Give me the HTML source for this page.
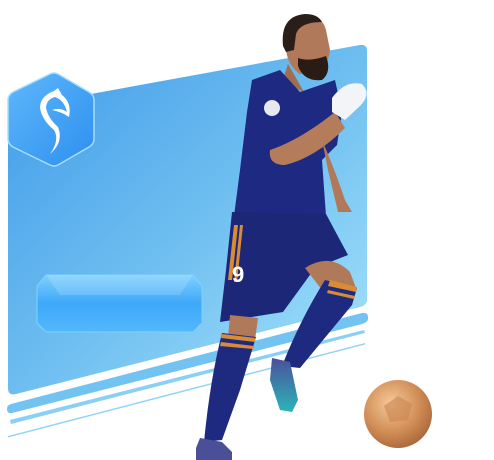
<!DOCTYPE html>
<html><head><meta charset="utf-8"><style>
html,body{margin:0;padding:0;background:#fff;width:494px;height:460px;overflow:hidden;font-family:"Liberation Sans",sans-serif}
</style></head><body>
<svg width="494" height="460" viewBox="0 0 494 460" xmlns="http://www.w3.org/2000/svg">
<defs>
<linearGradient id="pg" x1="0" y1="0" x2="1" y2="1">
<stop offset="0" stop-color="#3f9be8"/><stop offset="0.5" stop-color="#6dbdf0"/><stop offset="1" stop-color="#a6e4fc"/>
</linearGradient>
<linearGradient id="hx" x1="0" y1="0" x2="1" y2="1">
<stop offset="0" stop-color="#5fb8fb"/><stop offset="1" stop-color="#2d8fef"/>
</linearGradient>
<linearGradient id="bt" x1="0" y1="0" x2="0" y2="1">
<stop offset="0" stop-color="#7fd0fd"/><stop offset="0.5" stop-color="#3ea8fa"/><stop offset="1" stop-color="#53b8fb"/>
</linearGradient>
<radialGradient id="ball" cx="0.4" cy="0.35" r="0.7">
<stop offset="0" stop-color="#f6c99a"/><stop offset="0.6" stop-color="#d18d55"/><stop offset="1" stop-color="#a8653a"/>
</radialGradient>
<linearGradient id="boot" x1="0" y1="0" x2="0" y2="1">
<stop offset="0" stop-color="#4c4f9a"/><stop offset="1" stop-color="#2bb5b8"/>
</linearGradient>
</defs>
<path d="M14 108 L360 45 Q367 44 367 51 L367 300 Q367 305 360 307 L16 394 Q8 396 8 388 L8 116 Q8 109 14 108Z" fill="url(#pg)"/>
<path d="M11 404 L362 313 Q368 312 368 317 L368 319 Q368 322 362 324 L12 413 Q7 414 7 409 Q7 405 11 404Z" fill="#73c3f2"/>
<path d="M10 420 L364 330 L365 333 L11 424Z" fill="#8ad0f5"/>
<path d="M8 436 L365 343 L365 344.5 L8 437.5Z" fill="#8fd4f7"/>
<path d="M50 74 Q54 72 58 74 L89 92 Q94 95 94 100 L94 139 Q94 144 89 147 L58 165 Q54 167 50 165 L13 147 Q8 144 8 139 L8 100 Q8 95 13 92Z" fill="url(#hx)" stroke="#a9ddff" stroke-width="1.5"/>
<path d="M54 91 Q40 96 40 108 Q42 120 54 130 Q60 140 50 154 Q64 142 58 127 Q47 117 46 107 Q47 99 55 97 Q64 100 67 112 Q60 107 52 110 Q62 112 69 117 Q72 103 62 95 L58 88Z" fill="#fff"/>
<path d="M46 275 L193 275 L202 286 L202 323 L193 332 L46 332 L37 323 L37 286Z" fill="url(#bt)" stroke="#7fd3ff" stroke-width="1"/>
<path d="M46 275 L193 275 L180 295 L60 295Z" fill="#fff" opacity="0.15"/>
<g>
<path d="M286 50 Q282 22 302 16 Q322 14 326 30 L330 50 Q328 66 318 72 L300 74 Q288 66 286 50Z" fill="#b07a5a"/>
<path d="M283 46 Q280 16 305 14 Q318 14 322 22 Q300 22 296 34 L294 50 L286 52Z" fill="#2a1e18"/>
<path d="M298 58 Q310 62 326 56 Q332 72 322 80 Q304 82 298 66Z" fill="#2a1c14"/>
<path d="M288 64 L304 92 L282 82Z" fill="#a06e50"/>
<path d="M252 80 L280 70 L300 92 L335 80 L342 112 L337 145 L322 160 L326 216 L300 222 L234 216 L240 170 L247 112Z" fill="#1e2a82"/>
<path d="M232 212 L326 214 L348 255 L315 268 L283 312 L220 322 L226 270Z" fill="#1c2778"/>
<path d="M270 150 Q300 140 335 112 L345 128 Q315 158 285 165 Q268 165 270 150Z" fill="#b57c5c"/>
<path d="M332 98 Q345 80 362 84 Q372 94 360 106 L345 120 L332 112Z" fill="#f2f4f8"/>
<path d="M322 140 Q335 170 345 200 L352 212 L338 212 L328 170Z" fill="#b07a5a"/>
<path d="M305 268 Q330 252 350 272 L356 288 L322 290Z" fill="#b07a5a"/>
<path d="M325 280 L357 288 L352 305 L300 368 L282 366 Q300 320 325 280Z" fill="#1e2a80"/>
<path d="M330 280 L357 287 L356 292 L328 286Z M328 290 L355 296 L354 299 L327 293Z" fill="#d98b35"/>
<path d="M272 358 L290 362 L298 400 L292 412 L280 410 L270 380Z" fill="url(#boot)"/>
<path d="M230 315 L258 318 L255 340 L228 338Z" fill="#b07a5a"/>
<path d="M222 333 L256 337 L240 390 L222 440 L204 442 Q210 380 222 333Z" fill="#1e2a80"/>
<path d="M222 334 L256 338 L255 342 L221 338Z M221 342 L254 346 L253 349 L220 346Z" fill="#d98b35"/>
<path d="M200 438 L222 442 L232 452 L232 460 L196 460 L196 448Z" fill="#4a4f98"/>
<path d="M234 225 L228 280 L232 280 L238 225Z M240 225 L234 282 L237 282 L243 225Z" fill="#d98b35"/>
<text x="232" y="282" font-size="22" font-weight="bold" fill="#fff">9</text>
<circle cx="272" cy="108" r="8" fill="#e8e8f0"/>
</g>
<circle cx="398" cy="414" r="34" fill="url(#ball)"/>
<path d="M398 396 L412 404 L408 420 L390 422 L384 406Z" fill="#c98450" opacity="0.6"/>
</svg>
</body></html>
